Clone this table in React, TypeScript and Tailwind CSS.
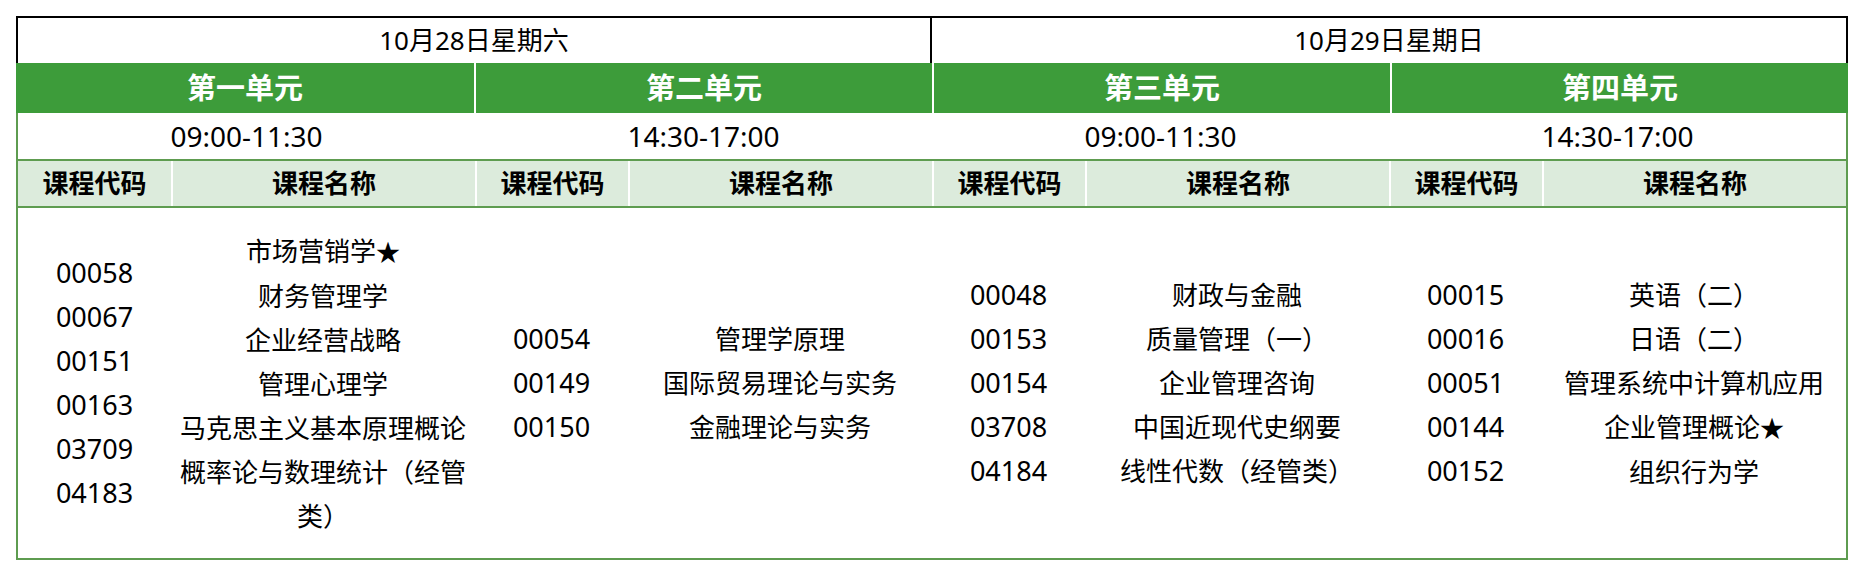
const FONT = "font-['Noto_Sans','Noto_Sans_CJK_SC',sans-serif]";

type Unit = {
  label: string;
  time: string;
  codes: string[];
  names: string[];
};

const days = ["10月28日星期六", "10月29日星期日"];

const units: Unit[] = [
  {
    label: "第一单元",
    time: "09:00-11:30",
    codes: ["00058", "00067", "00151", "00163", "03709", "04183"],
    names: [
      "市场营销学★",
      "财务管理学",
      "企业经营战略",
      "管理心理学",
      "马克思主义基本原理概论",
      "概率论与数理统计（经管类）",
    ],
  },
  {
    label: "第二单元",
    time: "14:30-17:00",
    codes: ["00054", "00149", "00150"],
    names: ["管理学原理", "国际贸易理论与实务", "金融理论与实务"],
  },
  {
    label: "第三单元",
    time: "09:00-11:30",
    codes: ["00048", "00153", "00154", "03708", "04184"],
    names: ["财政与金融", "质量管理（一）", "企业管理咨询", "中国近现代史纲要", "线性代数（经管类）"],
  },
  {
    label: "第四单元",
    time: "14:30-17:00",
    codes: ["00015", "00016", "00051", "00144", "00152"],
    names: ["英语（二）", "日语（二）", "管理系统中计算机应用", "企业管理概论★", "组织行为学"],
  },
];

const COLS = "grid-cols-[153px_304px_153px_304px_153px_304px_153px_304px]";

// star glyph renders a bit smaller in the original
function CourseName({ text }: { text: string }) {
  if (!text.endsWith("★")) return <>{text}</>;
  return (
    <>
      {text.slice(0, -1)}
      <span className="text-[24px]">★</span>
    </>
  );
}

export default function App() {
  return (
    <div className={`${FONT} bg-white min-h-[576px] pt-4 pl-4 text-black`}>
      <div className="w-[1832px]">
        {/* day titles */}
        <div className="grid grid-cols-2 h-[47px] border-t-2 border-x-2 border-black">
          {days.map((d, i) => (
            <div
              key={d}
              className={`flex items-center justify-center text-[26px] ${i === 0 ? "border-r-2 border-black" : ""}`}
            >
              {d}
            </div>
          ))}
        </div>

        {/* unit labels */}
        <div className="grid grid-cols-4 h-[50px] bg-[#3d9c3a]">
          {units.map((u, i) => (
            <div
              key={u.label}
              className={`flex items-center justify-center text-[29px] font-bold text-white ${i > 0 ? "border-l-2 border-white" : ""}`}
            >
              {u.label}
            </div>
          ))}
        </div>

        {/* times */}
        <div className="grid grid-cols-4 h-[46px] border-x-2 border-[#5e9c50]">
          {units.map((u, i) => (
            <div key={i} className="flex items-center justify-center text-[28px]">
              {u.time}
            </div>
          ))}
        </div>

        {/* column headers */}
        <div className={`grid ${COLS} h-[49px] border-2 border-[#5e9c50] bg-[#dcebdc]`}>
          {units.flatMap((u, i) => [
            <div
              key={`c${i}`}
              className={`flex items-center justify-center text-[26px] font-bold ${i > 0 ? "border-l-2 border-white" : ""}`}
            >
              课程代码
            </div>,
            <div
              key={`n${i}`}
              className="flex items-center justify-center text-[26px] font-bold border-l-2 border-white"
            >
              课程名称
            </div>,
          ])}
        </div>

        {/* courses */}
        <div className={`grid ${COLS} h-[352px] border-x-2 border-b-2 border-[#5e9c50]`}>
          {units.flatMap((u, i) => [
            <div key={`c${i}`} className="flex flex-col items-center justify-center text-[27px] leading-[44px]">
              {u.codes.map((c) => (
                <div key={c}>{c}</div>
              ))}
            </div>,
            <div
              key={`n${i}`}
              className="flex flex-col items-center justify-center px-2 text-center text-[26px] leading-[44px]"
            >
              {u.names.map((n) => (
                <div key={n}>
                  <CourseName text={n} />
                </div>
              ))}
            </div>,
          ])}
        </div>
      </div>
    </div>
  );
}
